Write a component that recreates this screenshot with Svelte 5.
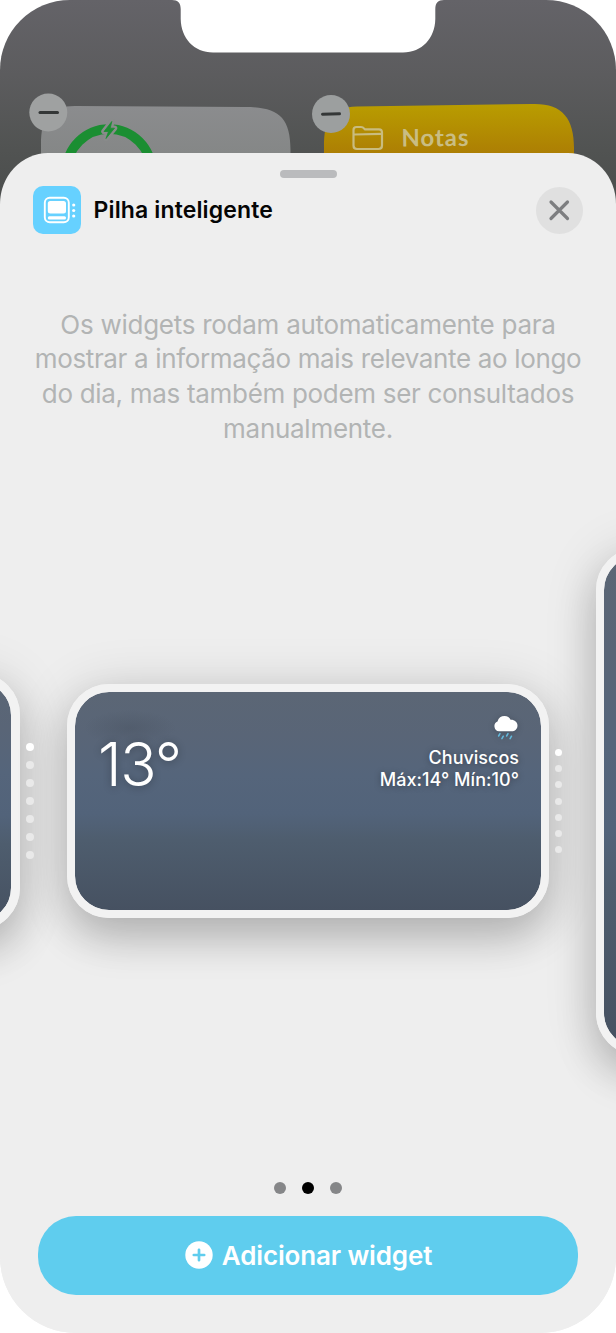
<script>
  const description = [
    { text: 'Os widgets rodam automaticamente para', spacing: -0.27 },
    { text: 'mostrar a informação mais relevante ao longo', spacing: -0.35 },
    { text: 'do dia, mas também podem ser consultados', spacing: -0.31 },
    { text: 'manualmente.', spacing: -0.28 }
  ];
  const stack = [0, 1, 2, 3, 4, 5, 6];
  const pages = [false, true, false];
</script>

<main class="phone">
  <svg class="home" viewBox="0 0 616 190" width="616" height="190">
    <defs>
      <linearGradient id="battery" x1="0" y1="0" x2="0" y2="1">
        <stop offset="0" stop-color="#8b8c8e" />
        <stop offset="1" stop-color="#808381" />
      </linearGradient>
      <linearGradient id="notes" x1="0" y1="0" x2="0" y2="1">
        <stop offset="0" stop-color="#b99d00" />
        <stop offset=".6" stop-color="#ac7d04" />
        <stop offset="1" stop-color="#ac7d04" />
      </linearGradient>
    </defs>
    <path d="M172 0C178 0 180.700 3 180.700 9V19C181 38 194 52.500 213 52.500H403C422 52.500 435 38 435.300 19V9C435.300 3 438 0 444 0Z" fill="#fff" />
    <path d="M41 190V145C41 118 49 106 75 106L245 107C278 107 290.500 117 290.500 150V190Z" fill="url(#battery)" />
    <circle cx="109" cy="171.500" r="42.500" fill="none" stroke="#1b8e32" stroke-width="9.500" />
    <path d="M111.800 121.500L104 131.500H108.500L106 138.500L114.500 128.200H110.200Z" fill="#898b8b" stroke="#898b8b" stroke-width="5.500" stroke-linejoin="round" />
    <path d="M111.800 121.500L104 131.500H108.500L106 138.500L114.500 128.200H110.200Z" fill="#1b8e32" stroke="#1b8e32" stroke-width=".8" stroke-linejoin="round" />
    <path d="M324 190V147C324 119 331 107 357 106.500L532 104C562 103 574 118 574 148V190Z" fill="url(#notes)" />
    <g fill="none" stroke="#c9bc7f" stroke-width="2.200" stroke-linejoin="round">
      <path d="M353.500 132V130Q353.500 127 356.500 127H361Q363 127 364 128.500L365 129.300H379Q382 129.300 382 132.500V145.500Q382 149 378.500 149H357Q353.500 149 353.500 145.500Z" />
      <path d="M354 134.500L381.500 133.800" />
    </g>
    <text x="401.500" y="146.500" class="notes" transform="rotate(-.6 401 146)">Notas</text>
    <g>
      <circle cx="48.300" cy="112.500" r="19" fill="#9fa1a1" />
      <path d="M40 112.500H57.500" stroke="#343737" stroke-width="3" stroke-linecap="round" />
      <circle cx="331" cy="114" r="19" fill="#9c9f9f" />
      <path d="M322.500 114.200L339.500 113.800" stroke="#343737" stroke-width="3" stroke-linecap="round" />
    </g>
  </svg>

  <section class="sheet">
    <div class="grabber"></div>
    <header>
      <svg class="app" viewBox="0 0 48 48">
        <rect width="48" height="48" rx="10" fill="#66d1ff" />
        <rect x="11.800" y="11.800" width="24" height="24.400" rx="5" fill="none" stroke="#fff" stroke-width="1.900" />
        <rect x="14.800" y="15" width="18.200" height="12.500" rx="2.500" fill="#fff" />
        <rect x="14.800" y="30.200" width="18.200" height="3.200" rx="1.500" fill="#fff" />
        <g fill="#fff"><circle cx="40.700" cy="19" r="1.600" /><circle cx="40.700" cy="24.500" r="1.600" /><circle cx="40.700" cy="30" r="1.600" /></g>
      </svg>
      <h1>Pilha inteligente</h1>
      <button class="close" aria-label="Fechar">
        <svg viewBox="0 0 47 47" width="47" height="47"><path d="M15 15L31.500 31.500M31.500 15L15 31.500" stroke="#7d7e80" stroke-width="3.200" stroke-linecap="round" /></svg>
      </button>
    </header>

    <p class="description">
      {#each description as line}
        <span style="letter-spacing: {line.spacing}px">{line.text}</span>
      {/each}
    </p>

    <div class="carousel">
      <div class="card small"></div>
      <div class="dots wide">{#each stack as i}<i class:on={i === 0}></i>{/each}</div>
      <article class="card medium">
        <div class="temp">13°</div>
        <div class="weather">
          <svg viewBox="0 0 26 26" width="26" height="26">
            <path d="M6 16.300A5.200 5.200 0 0 1 4.500 6.400C5.500 2.800 8.200 1 11.500 1C14.500 1 16.600 2.500 17.600 4.700C21.500 4.500 24.500 7 24.500 10.500C24.500 14 22 16.300 18.500 16.300Z" fill="#fff" />
            <path d="M7 18.600L5.600 21M10.300 21.200L8.900 23.600M15 18.600L13.600 21M18.500 21.200L17.100 23.600" stroke="#62b9dc" stroke-width="1.500" stroke-linecap="round" />
          </svg>
          <span class="condition">Chuviscos</span>
          <span class="range">Máx:14° Mín:10°</span>
        </div>
      </article>
      <div class="dots tight">{#each stack as i}<i class:on={i === 0}></i>{/each}</div>
      <div class="card large"></div>
    </div>

    <div class="pages">{#each pages as current}<i class:current></i>{/each}</div>
    <button class="add">
      <svg viewBox="0 0 28 28" width="28" height="28">
        <circle cx="14" cy="14" r="13.700" fill="#fff" />
        <path d="M8.800 14H19.200M14 8.800V19.200" stroke="#5fcdee" stroke-width="2.700" stroke-linecap="round" />
      </svg>
      <span>Adicionar widget</span>
    </button>
  </section>
</main>

<style>
  :global(body) { background: #fff; }
  * { box-sizing: border-box; }
  .phone {
    width: 616px;
    height: 1333px;
    display: flex;
    flex-direction: column;
    overflow: hidden;
    border-radius: 70px 70px 76px 76px;
    background: linear-gradient(#646368 0, #5c5c5e 75px, #515352 150px, #484b4a 220px, #eee 221px);
    font-family: Inter, "Liberation Sans", sans-serif;
  }
  .home { flex: none; display: block; margin-bottom: -37px; }
  .notes { font: 700 24px Lato, sans-serif; fill: #c9bd83; letter-spacing: .9px; }
  .sheet {
    position: relative;
    flex: 1;
    min-height: 0;
    display: flex;
    flex-direction: column;
    align-items: center;
    padding-top: 16.500px;
    border-radius: 48px 48px 0 0 / 51px 51px 0 0;
    background: #eee;
    overflow: hidden;
  }
  .grabber { flex: none; width: 57px; height: 8px; border-radius: 4px; background: #babbbd; }
  header {
    flex: none;
    align-self: stretch;
    height: 48px;
    margin-top: 8.500px;
    padding: 0 33px;
    display: flex;
    align-items: center;
  }
  .app { width: 48px; height: 48px; }
  h1 { margin: 0 auto 0 12.500px; font-size: 23px; font-weight: 600; letter-spacing: .14px; color: #050505; }
  button { border: 0; padding: 0; font-family: inherit; }
  .close { width: 47px; height: 47px; border-radius: 50%; background: #e0e0e0; }
  .close svg { display: block; }
  .description {
    flex: none;
    margin: 73.500px 0 0;
    height: 139.500px;
    display: flex;
    flex-direction: column;
    align-items: center;
    font-size: 26px;
    line-height: 34.700px;
    white-space: nowrap;
    color: #b2b4b4;
  }
  .carousel {
    flex: none;
    align-self: flex-start;
    margin: 100.500px 0 0 -237px;
    height: 507px;
    display: flex;
    align-items: center;
  }
  .card {
    flex: none;
    border: 8.500px solid #f2f2f2;
    border-radius: 42px;
    background: linear-gradient(#5b6675 0, #596577 20%, #55657b 38%, #52637a 56%, #4e5d6e 68%, #465161 100%) padding-box;
    box-shadow: 0 22px 40px rgba(0, 0, 0, .18), 0 4px 54px rgba(0, 0, 0, .14);
  }
  .small { width: 257px; height: 257px; border-width: 9.500px; }
  .medium {
    width: 482px;
    height: 234px;
    display: flex;
    justify-content: space-between;
    padding: 21px 22px 0 23px;
    color: #fff;
    background:
      radial-gradient(ellipse 46px 18px at 55px 36px, rgba(70, 80, 94, .4), rgba(70, 80, 94, 0)) padding-box,
      linear-gradient(#5b6675 0, #596577 20%, #55657b 38%, #52637a 56%, #4e5d6e 68%, #465161 100%) padding-box;
  }
  .large { width: 507px; height: 507px; }
  .dots { position: relative; z-index: 1; flex: none; display: flex; flex-direction: column; align-items: center; }
  .dots i { width: 8px; height: 8px; border-radius: 50%; background: #e9e9e9; }
  .dots i.on { background: #fff; }
  .wide { width: 20px; margin-right: 27px; gap: 10.100px; }
  .tight { width: 18px; margin-right: 29px; gap: 9.100px; }
  .tight i { width: 7px; height: 7px; }
  .temp { margin-top: 14.500px; font-size: 60px; line-height: 72px; font-weight: 300; letter-spacing: -1.300px; text-shadow: 0 1px 8px rgba(0, 0, 0, .3); }
  .weather { display: flex; flex-direction: column; align-items: flex-end; font-size: 18px; line-height: 21.500px; font-weight: 450; text-shadow: 0 1px 6px rgba(0, 0, 0, .35); }
  .weather svg { margin: 2px 0 6px; filter: drop-shadow(0 1px 3px rgba(0, 0, 0, .2)); }
  .condition { letter-spacing: 0; }
  .range { letter-spacing: .05px; }
  .pages { flex: none; margin-top: 127px; display: flex; gap: 15.700px; }
  .pages i { width: 12.200px; height: 12.200px; border-radius: 50%; background: #858688; }
  .pages i.current { background: #000; }
  .add {
    flex: none;
    width: 540px;
    height: 79px;
    margin-top: 22px;
    display: flex;
    align-items: center;
    justify-content: center;
    gap: 9px;
    border-radius: 38px;
    background: #5fcdee;
    color: #fff;
    font-size: 26px;
    font-weight: 600;
    letter-spacing: -.15px;
    padding-left: 1px;
  }
  .add span { padding-top: 1px; }
</style>
